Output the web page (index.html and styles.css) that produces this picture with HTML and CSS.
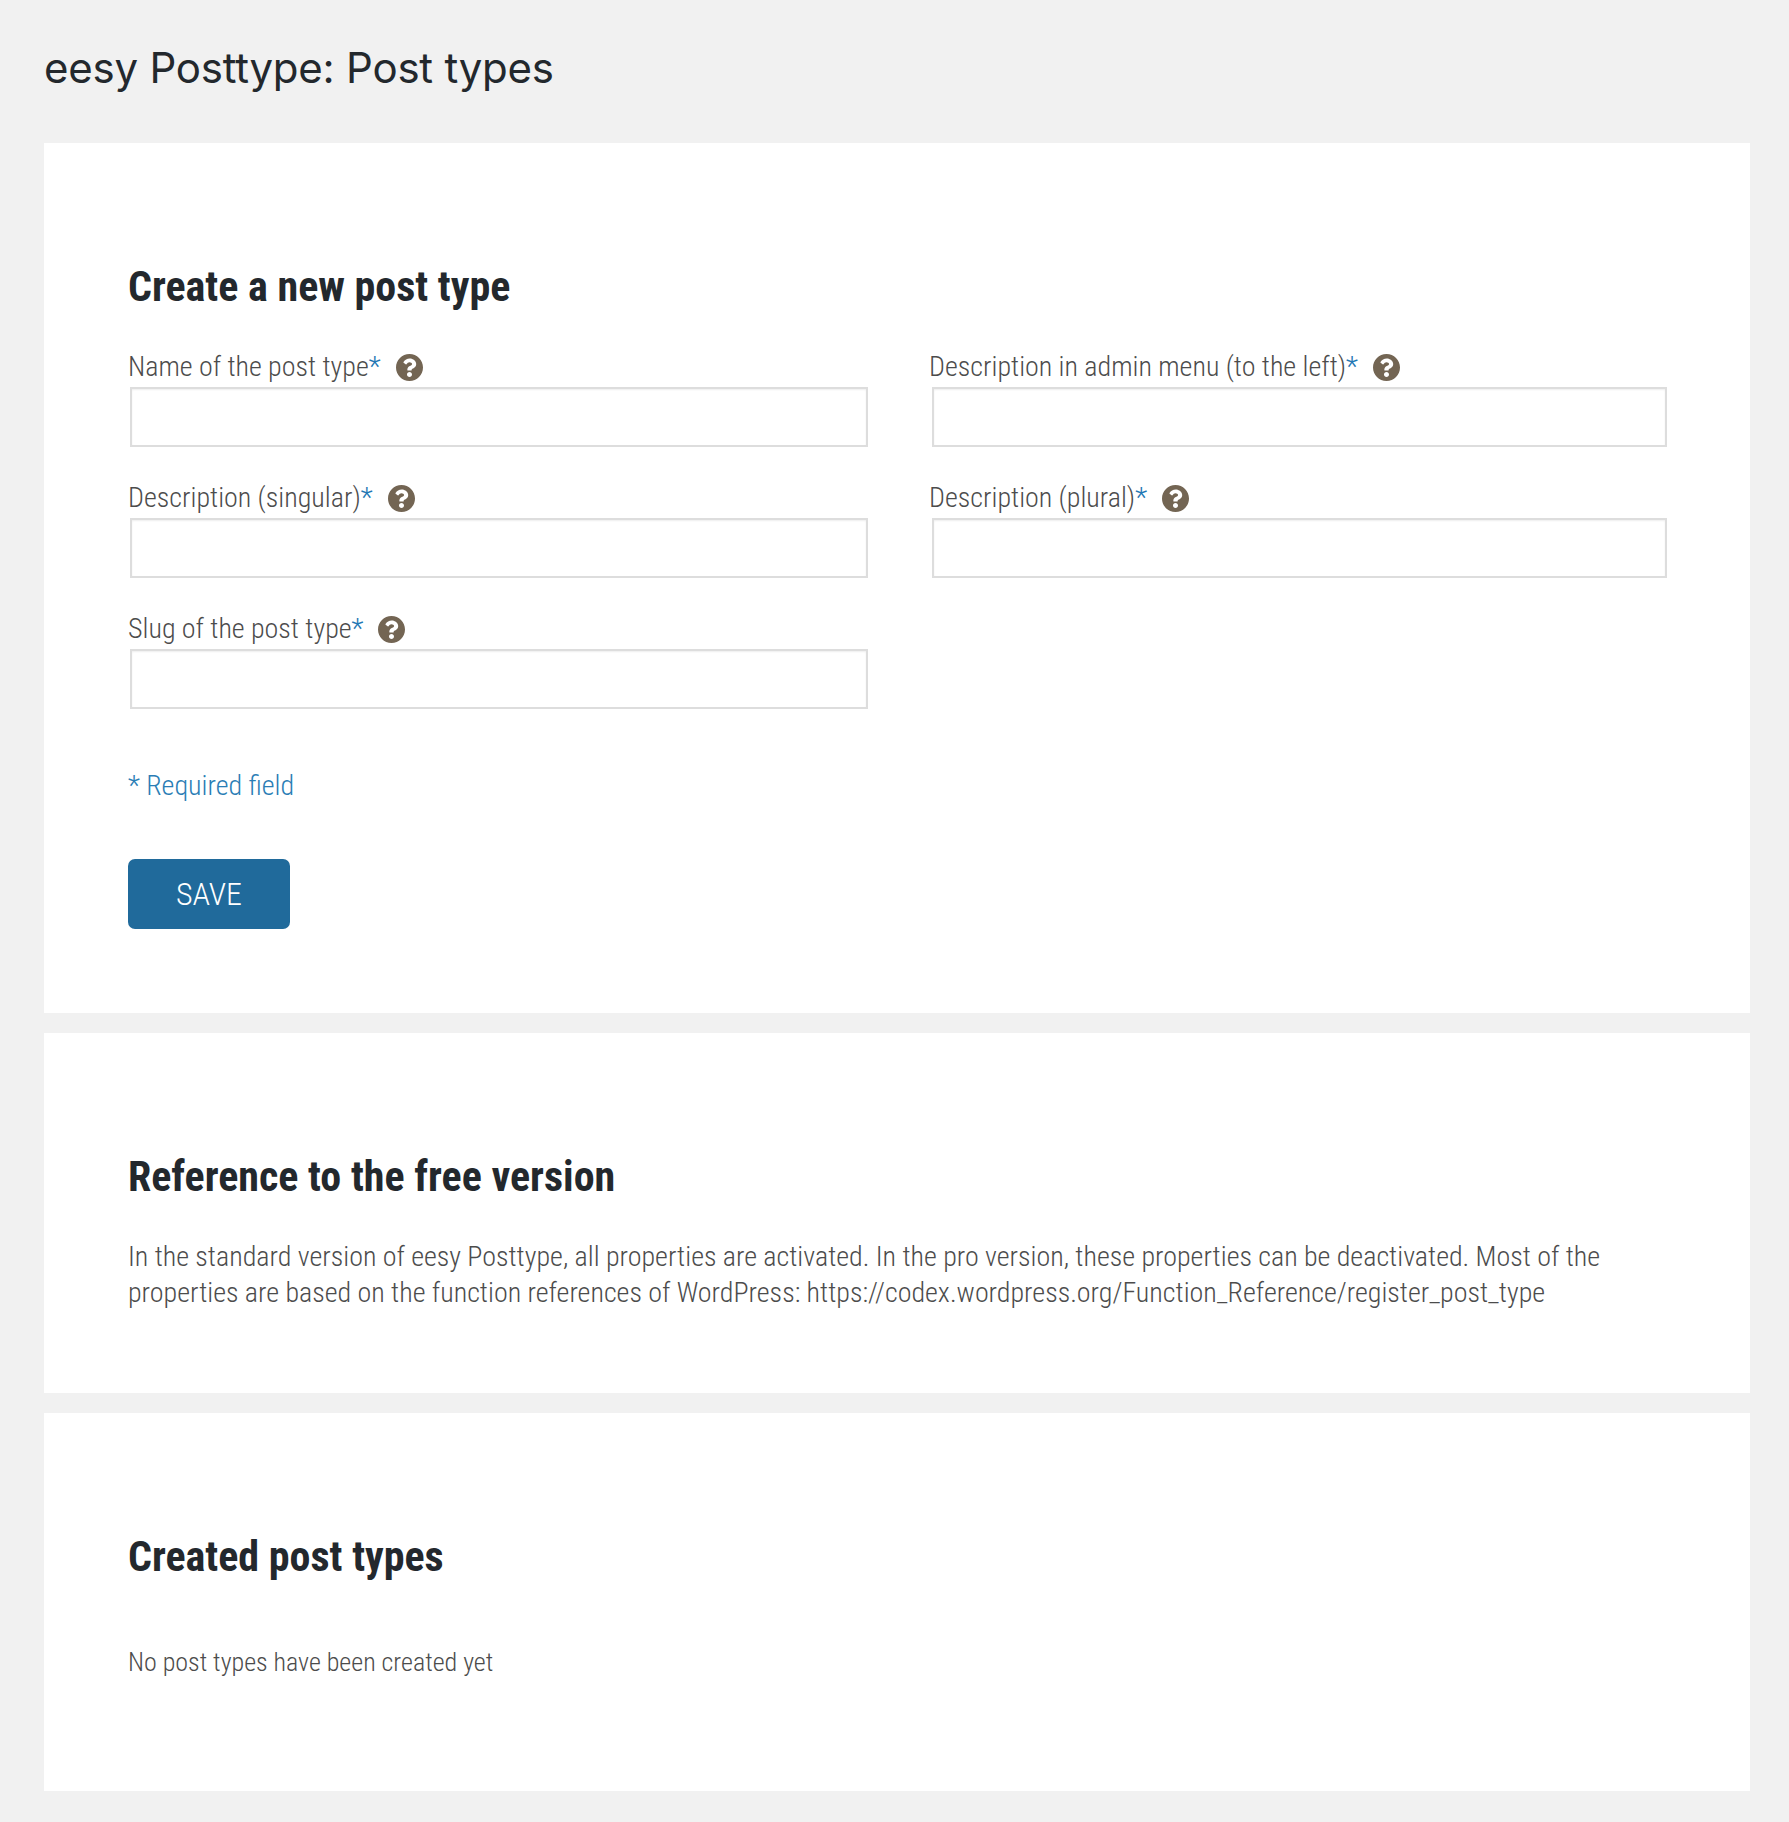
FILE: index.html

```html
<!DOCTYPE html>
<html>
<head>
  <title>eesy Posttype: Post types</title>
  <link rel="stylesheet" href="styles.css">
</head>
<body>
<svg class="icon-defs" width="0" height="0">
  <symbol id="help" viewBox="8 8 496 496">
    <path d="M504 256c0 136.997-111.043 248-248 248S8 392.997 8 256C8 119.083 119.043 8 256 8s248 111.083 248 248zM262.655 90c-54.497 0-89.255 22.957-116.549 63.758-3.536 5.286-2.353 12.415 2.715 16.258l34.699 26.31c5.205 3.947 12.621 3.008 16.665-2.122 17.864-22.658 30.113-35.797 57.303-35.797 20.429 0 45.698 13.148 45.698 32.958 0 14.976-12.363 22.667-32.534 33.976C247.128 238.528 216 254.941 216 296v4c0 6.627 5.373 12 12 12h56c6.627 0 12-5.373 12-12v-1.333c0-28.462 83.186-29.647 83.186-106.667 0-58.002-60.165-102-116.531-102zM256 338c-25.365 0-46 20.635-46 46 0 25.364 20.635 46 46 46s46-20.636 46-46c0-25.365-20.635-46-46-46z"/>
  </symbol>
</svg>

<h1 class="page-title">eesy Posttype: Post types</h1>

<div class="panel panel-form">
  <h2>Create a new post type</h2>
  <form class="form-grid">
    <div class="field">
      <label>Name of the post type<span class="req">*</span><svg class="help"><use href="#help"/></svg></label>
      <input type="text">
    </div>
    <div class="field">
      <label>Description in admin menu (to the left)<span class="req">*</span><svg class="help"><use href="#help"/></svg></label>
      <input type="text">
    </div>
    <div class="field">
      <label>Description (singular)<span class="req">*</span><svg class="help"><use href="#help"/></svg></label>
      <input type="text">
    </div>
    <div class="field">
      <label>Description (plural)<span class="req">*</span><svg class="help"><use href="#help"/></svg></label>
      <input type="text">
    </div>
    <div class="field">
      <label>Slug of the post type<span class="req">*</span><svg class="help"><use href="#help"/></svg></label>
      <input type="text">
    </div>
  </form>
  <p class="required-note">* Required field</p>
  <button class="save" type="button">SAVE</button>
</div>

<div class="panel panel-ref">
  <h2>Reference to the free version</h2>
  <p class="copy">In the standard version of eesy Posttype, all properties are activated. In the pro version, these properties can be deactivated. Most of the properties are based on the function references of WordPress: https://codex.wordpress.org/Function_Reference/register_post_type</p>
</div>

<div class="panel panel-list">
  <h2>Created post types</h2>
  <p class="empty">No post types have been created yet</p>
</div>
</body>
</html>
```

FILE: styles.css

```css
body { margin: 0; padding: 0 39px 32px 44px; background: #f1f1f1; color: #23282d; font-family: Roboto, "Liberation Sans", sans-serif; font-stretch: condensed; }
.icon-defs { position: absolute; }
.page-title { margin: 0; padding: 40px 0 47px; font-family: Inter, sans-serif; font-size: 42px; line-height: 56px; font-weight: 400; letter-spacing: -0.23px; color: #23282d; }
.panel { background: #fff; padding: 0 84px; margin-bottom: 20px; box-sizing: border-box; }
.panel h2 { margin: 0; font-size: 42px; line-height: 48px; font-weight: 700; color: #23282d; }
.panel-form { height: 870px; padding-top: 120px; }
.panel-ref { height: 360px; padding-top: 120px; }
.panel-list { height: 378px; padding-top: 120px; margin-bottom: 0; }
.form-grid { display: grid; grid-template-columns: 740px 737px; column-gap: 62px; row-gap: 33px; margin-top: 38px; }
.field label { display: flex; align-items: center; font-size: 28px; line-height: 36px; font-weight: 300; color: #4c4c4c; }
.field:nth-child(even) label { margin-left: -1px; }
.req { color: #1f77b4; }
.help { width: 27px; height: 27px; margin-left: 15px; fill: #736553; }
.field input { display: block; box-sizing: border-box; width: calc(100% - 2px); height: 60px; margin: 2px 0 0 2px; border: 2px solid #ddd; background: #fff; box-shadow: inset 0 1px 2px rgba(0,0,0,.07); padding: 0; }
.required-note { margin: 59px 0 0; font-size: 28px; line-height: 36px; font-weight: 300; color: #2a7db5; }
.save { display: block; width: 162px; height: 70px; margin-top: 55px; border: 0; border-radius: 7px; background: #206a9b; color: #fff; font-family: inherit; font-stretch: inherit; font-size: 32px; font-weight: 300; }
.copy { margin: 38px 0 0; font-size: 28px; line-height: 36px; font-weight: 300; color: #4c4c4c; }
.empty { margin: 63px 0 0; font-size: 26px; line-height: 36px; font-weight: 300; color: #4c4c4c; }
```
